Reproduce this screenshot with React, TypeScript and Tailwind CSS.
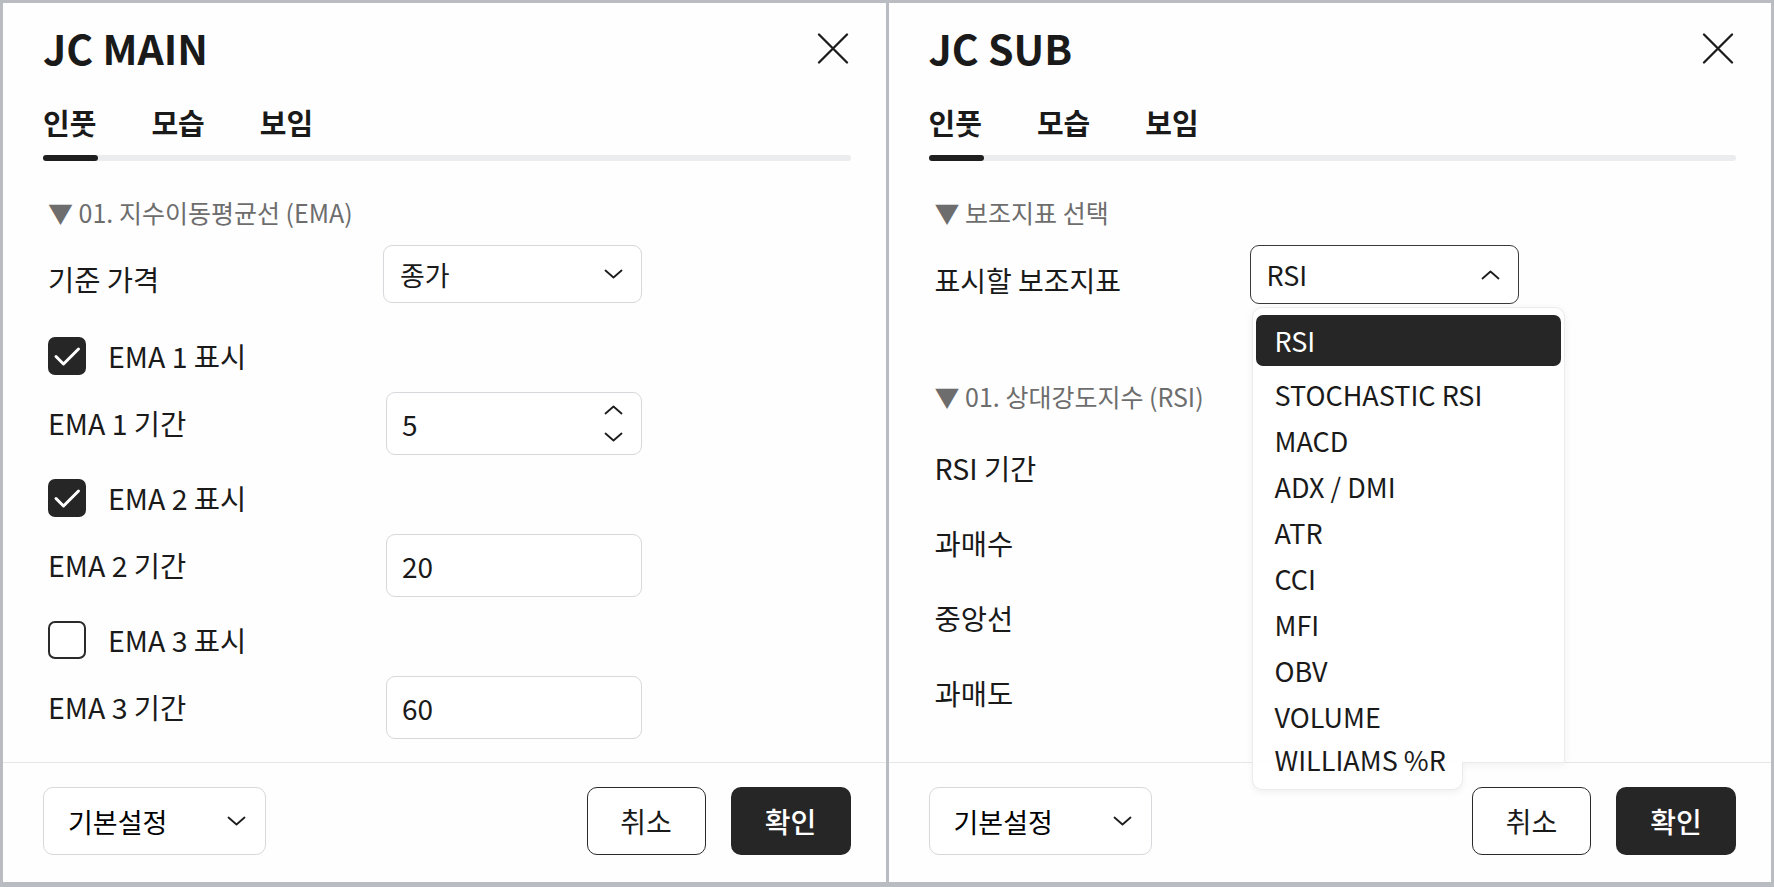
import React from "react";

const indicators = [
  "STOCHASTIC RSI",
  "MACD",
  "ADX / DMI",
  "ATR",
  "CCI",
  "MFI",
  "OBV",
  "VOLUME",
  "WILLIAMS %R",
];

function CloseIcon() {
  return (
    <svg width="32" height="31" viewBox="0 0 32 31" fill="none" stroke="#1c1c1c" strokeWidth="2.3" strokeLinecap="round">
      <path d="M2 1.5 30 29.5M30 1.5 2 29.5" />
    </svg>
  );
}

function ChevronDown() {
  return (
    <svg width="19" height="10" viewBox="0 0 19 10" fill="none" stroke="#1c1c1c" strokeWidth="1.8" strokeLinecap="round" strokeLinejoin="round">
      <path d="M1.5 1.5 9.5 8.5 17.5 1.5" />
    </svg>
  );
}

function ChevronUp() {
  return (
    <svg width="19" height="10" viewBox="0 0 19 10" fill="none" stroke="#1c1c1c" strokeWidth="1.8" strokeLinecap="round" strokeLinejoin="round">
      <path d="M1.5 8.5 9.5 1.5 17.5 8.5" />
    </svg>
  );
}

function CheckBox({ checked }: { checked?: boolean }) {
  if (!checked) {
    return <div className="h-[38px] w-[38px] shrink-0 rounded-[7px] border-[2px] border-[#2a2a2a] bg-white" />;
  }
  return (
    <div className="flex h-[38px] w-[38px] shrink-0 items-center justify-center rounded-[7px] bg-[#262626]">
      <svg width="38" height="38" viewBox="0 0 38 38" fill="none" stroke="#fff" strokeWidth="3" strokeLinecap="round" strokeLinejoin="round">
        <path d="M8 19.5 15.5 27 30.5 12" />
      </svg>
    </div>
  );
}

function Header({ title }: { title: string }) {
  return (
    <div className="pl-[40px] pr-[35px]">
      <div className="mt-[14px] flex h-[60px] items-center justify-between">
        <h1 className="text-[41px] font-bold leading-none text-[#1a1a1a]">{title}</h1>
        <button className="mr-[2px] mt-[2px]">
          <CloseIcon />
        </button>
      </div>
      <div className="mt-[25px]">
        <div className="flex h-[40px] items-center gap-[55px] text-[29px] font-bold leading-none text-[#1a1a1a]">
          <span>인풋</span>
          <span>모습</span>
          <span>보임</span>
        </div>
        <div className="mt-[13px] h-[6px] rounded-full bg-[#ebecee]">
          <div className="h-full w-[55px] rounded-full bg-[#1f1f1f]" />
        </div>
      </div>
    </div>
  );
}

function SectionTitle({ children, className }: { children: React.ReactNode; className: string }) {
  return (
    <div className={`flex h-[30px] items-center text-[25px] leading-none text-[#6d6d6d] ${className}`}>{children}</div>
  );
}

function CheckRow({ label, checked, className }: { label: string; checked?: boolean; className: string }) {
  return (
    <div className={`flex items-center gap-[22px] ${className}`}>
      <CheckBox checked={checked} />
      <span className="text-[28.5px] leading-none">{label}</span>
    </div>
  );
}

function NumberRow({ label, value, spinner, className }: { label: string; value: string; spinner?: boolean; className: string }) {
  return (
    <div className={`flex items-center ${className}`}>
      <span className="w-[338px] text-[28.5px] leading-none">{label}</span>
      <div className="flex h-[63px] w-[256px] items-center justify-between rounded-[9px] border-[1.5px] border-[#d6d8db] bg-white pl-[15px] pr-[18px]">
        <span className="text-[28px] leading-none">{value}</span>
        {spinner && (
          <div className="flex flex-col gap-[17px]">
            <ChevronUp />
            <ChevronDown />
          </div>
        )}
      </div>
    </div>
  );
}

function Footer() {
  return (
    <div className="flex items-center justify-between border-t-[1.5px] border-[#e6e7e9] pb-[27px] pl-[40px] pr-[35px] pt-[24px]">
      <div className="flex h-[68px] w-[223px] items-center justify-between rounded-[10px] border-[1.5px] border-[#d6d8db] bg-white pl-[24px] pr-[19px]">
        <span className="text-[27px] leading-none">기본설정</span>
        <ChevronDown />
      </div>
      <div className="flex gap-[25px]">
        <button className="flex h-[68px] w-[119px] items-center justify-center rounded-[10px] border-[1.5px] border-[#2a2a2a] bg-white text-[28px] leading-none text-[#1a1a1a]">
          취소
        </button>
        <button className="flex h-[68px] w-[120px] items-center justify-center rounded-[10px] bg-[#262626] text-[28px] font-medium leading-none text-white">
          확인
        </button>
      </div>
    </div>
  );
}

function MainPanel() {
  return (
    <div className="flex h-full flex-1 flex-col bg-[#fefefe]">
      <Header title="JC MAIN" />
      <div className="flex-1 pl-[45px] pr-[35px] text-[#1a1a1a]">
        <SectionTitle className="mt-[36px]">▼ 01. 지수이동평균선 (EMA)</SectionTitle>
        <div className="mt-[18px] flex items-center">
          <span className="w-[335px] pt-[10px] text-[28.5px] leading-none">기준 가격</span>
          <div className="flex h-[58px] w-[259px] items-center justify-between rounded-[9px] border-[1.5px] border-[#d6d8db] bg-white pl-[16px] pr-[18px]">
            <span className="text-[27px] leading-none">종가</span>
            <ChevronDown />
          </div>
        </div>
        <CheckRow checked label="EMA 1 표시" className="mt-[34px]" />
        <NumberRow label="EMA 1 기간" value="5" spinner className="mt-[17px]" />
        <CheckRow checked label="EMA 2 표시" className="mt-[24px]" />
        <NumberRow label="EMA 2 기간" value="20" className="mt-[17px]" />
        <CheckRow label="EMA 3 표시" className="mt-[24px]" />
        <NumberRow label="EMA 3 기간" value="60" className="mt-[17px]" />
      </div>
      <Footer />
    </div>
  );
}

function SubPanel() {
  return (
    <div className="flex h-full flex-1 flex-col bg-[#fefefe]">
      <Header title="JC SUB" />
      <div className="flex-1 pl-[46px] pr-[35px] text-[#1a1a1a]">
        <SectionTitle className="mt-[36px]">▼ 보조지표 선택</SectionTitle>
        <div className="mt-[18px] flex items-center">
          <span className="w-[315px] pt-[10px] text-[28px] leading-none">표시할 보조지표</span>
          <div className="relative">
            <div className="flex h-[59px] w-[269px] items-center justify-between rounded-[9px] border-[1.5px] border-[#3a3a3a] bg-white pl-[16px] pr-[18px]">
              <span className="text-[27px] leading-none">RSI</span>
              <ChevronUp />
            </div>
            {/* open indicator list */}
            <div className="absolute left-[2px] top-[62px] z-10 w-[313px] text-[27px] leading-none text-[#1a1a1a]">
              <div className="h-[456px] rounded-t-[10px] border border-[#ebebeb] bg-white px-[3px] pt-[7px] shadow-[0_2px_8px_rgba(0,0,0,0.06)]">
                <div className="flex h-[51px] items-center rounded-[7px] bg-[#262626] pl-[19px] text-white">RSI</div>
                <ul className="mt-[5px]">
                  {indicators.map((name, i) => (
                    <li
                      key={name}
                      className={i === indicators.length - 1 ? "flex h-[40px] items-center pl-[19px]" : "flex h-[46px] items-center pl-[19px]"}
                    >
                      {name}
                    </li>
                  ))}
                </ul>
              </div>
              <div className="-mt-[1px] h-[28px] w-[211px] rounded-b-[10px] border border-t-0 border-[#ebebeb] bg-white shadow-[0_3px_6px_rgba(0,0,0,0.05)]" />
            </div>
          </div>
        </div>
        <SectionTitle className="mt-[77px]">▼ 01. 상대강도지수 (RSI)</SectionTitle>
        <div className="mt-[26px] flex flex-col gap-[12px] text-[28.5px] leading-none">
          <div className="flex h-[63px] items-center">RSI 기간</div>
          <div className="flex h-[63px] items-center">과매수</div>
          <div className="flex h-[63px] items-center">중앙선</div>
          <div className="flex h-[63px] items-center">과매도</div>
        </div>
      </div>
      <Footer />
    </div>
  );
}

export default function App() {
  return (
    <div className="flex h-[887px] w-full gap-[3px] bg-[#b9bcc0] pb-[5px] pl-[3px] pr-[3px] pt-[3px] font-['Noto_Sans_CJK_KR','Noto_Sans',sans-serif]">
      <MainPanel />
      <SubPanel />
    </div>
  );
}
